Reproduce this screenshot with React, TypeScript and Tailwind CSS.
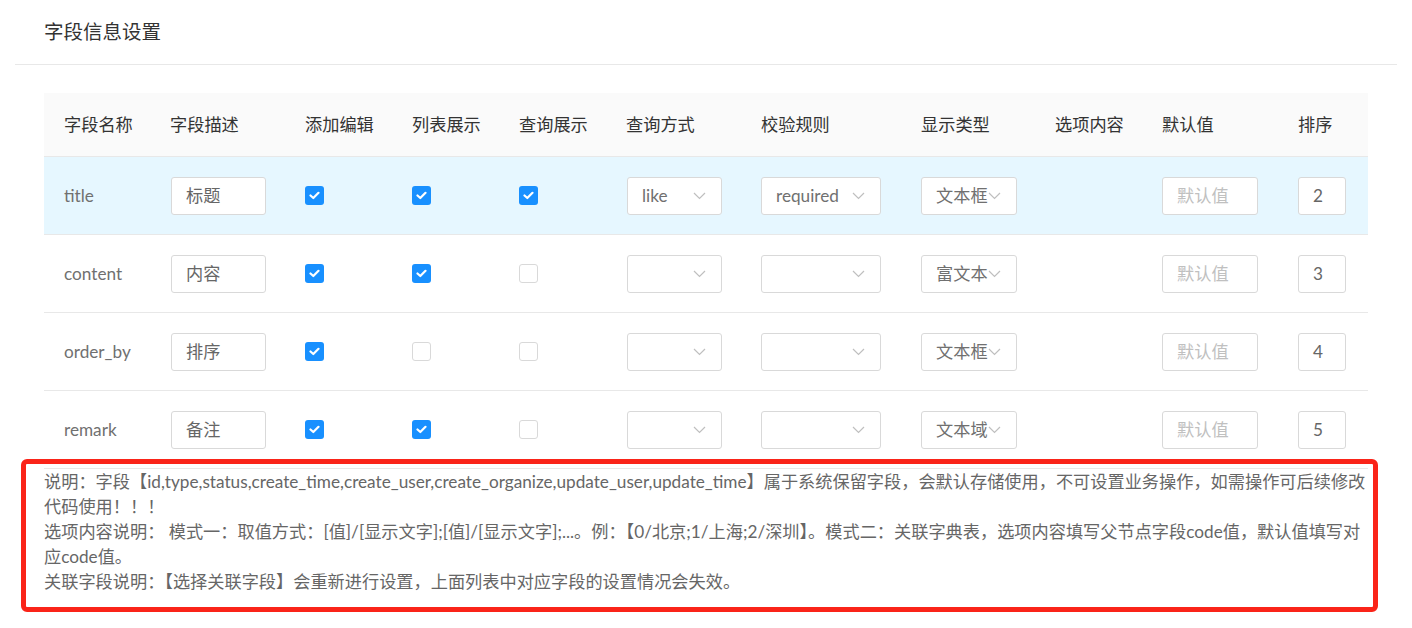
import React from "react";

const font = { fontFamily: '"Lato", "Noto Sans CJK SC", sans-serif' };

type Row = {
  name: string;
  desc: string;
  add: boolean;
  list: boolean;
  query: boolean;
  method: string;
  rule: string;
  display: string;
  order: string;
  hl?: boolean;
};

const rows: Row[] = [
  { name: "title", desc: "标题", add: true, list: true, query: true, method: "like", rule: "required", display: "文本框", order: "2", hl: true },
  { name: "content", desc: "内容", add: true, list: true, query: false, method: "", rule: "", display: "富文本", order: "3" },
  { name: "order_by", desc: "排序", add: true, list: false, query: false, method: "", rule: "", display: "文本框", order: "4" },
  { name: "remark", desc: "备注", add: true, list: true, query: false, method: "", rule: "", display: "文本域", order: "5" },
];

const cols = "grid grid-cols-[106px_135px_107px_107px_107px_135px_160px_134px_107px_136px_90px]";

function Check({ on }: { on: boolean }) {
  if (on)
    return (
      <span className="flex h-[19px] w-[19px] items-center justify-center rounded-[3px] bg-[#1890ff]">
        <svg width="11" height="9" viewBox="0 0 11 9" fill="none">
          <polyline points="1.5,4.5 4.3,7 9.5,1.8" stroke="white" strokeWidth="2.2" strokeLinecap="round" strokeLinejoin="round" />
        </svg>
      </span>
    );
  return <span className="block h-[19px] w-[19px] rounded-[3px] border border-[#d9d9d9] bg-white" />;
}

function Chevron() {
  return (
    <svg width="13" height="8" viewBox="0 0 13 8" fill="none" className="shrink-0">
      <polyline points="1,1 6.5,6.5 12,1" stroke="#bfbfbf" strokeWidth="1.2" />
    </svg>
  );
}

function Select({ value, w }: { value: string; w: string }) {
  return (
    <div className={`flex h-[38px] items-center rounded-[3px] border border-[#d9d9d9] bg-white pl-[14px] pr-[15px] ${w}`}>
      <span className="flex-1 whitespace-nowrap text-[#707070]">{value}</span>
      <Chevron />
    </div>
  );
}

function Input({ value, placeholder, w }: { value?: string; placeholder?: string; w: string }) {
  return (
    <div className={`flex h-[38px] items-center rounded-[3px] border border-[#d9d9d9] bg-white pl-[14px] ${w}`}>
      {value ? <span className="text-[#666]">{value}</span> : <span className="text-[#c0c0c0]">{placeholder}</span>}
    </div>
  );
}

export default function App() {
  const headers = ["字段名称", "字段描述", "添加编辑", "列表展示", "查询展示", "查询方式", "校验规则", "显示类型", "选项内容", "默认值", "排序"];
  return (
    <div className="min-h-[628px] w-[1412px] bg-white px-[15px] text-[17.2px]" style={font}>
      <div className="flex h-[65px] items-center border-b border-[#e8e8e8] pl-[29px] text-[19.5px] text-[#333]">字段信息设置</div>
      <div className="ml-[29px] mt-[28px] w-[1324px]">
        <div className={`${cols} h-[64px] items-center border-b border-[#e8e8e8] bg-[#fafafa] text-[#333]`}>
          {headers.map((h) => (
            <div key={h} className="whitespace-nowrap pl-[20px]">
              {h}
            </div>
          ))}
        </div>
        {rows.map((r) => (
          <div key={r.name} className={`${cols} h-[78px] items-center border-b border-[#e8e8e8] ${r.hl ? "bg-[#e6f7ff]" : "bg-white"}`}>
            <div className="pl-[20px] text-[#707070]">{r.name}</div>
            <div className="pl-[21px]">
              <Input value={r.desc} w="w-[95px]" />
            </div>
            <div className="pl-[20px]">
              <Check on={r.add} />
            </div>
            <div className="pl-[20px]">
              <Check on={r.list} />
            </div>
            <div className="pl-[20px]">
              <Check on={r.query} />
            </div>
            <div className="pl-[21px]">
              <Select value={r.method} w="w-[95px]" />
            </div>
            <div className="pl-[20px]">
              <Select value={r.rule} w="w-[120px]" />
            </div>
            <div className="pl-[20px]">
              <Select value={r.display} w="w-[96px]" />
            </div>
            <div />
            <div className="pl-[20px]">
              <Input placeholder="默认值" w="w-[96px]" />
            </div>
            <div className="pl-[20px]">
              <Input value={r.order} w="w-[48px]" />
            </div>
          </div>
        ))}
        <div className="relative leading-[25px] text-[#666]">
          <p>
            说明：字段【id,type,status,create_time,create_user,create_organize,update_user,update_time】属于系统保留字段，会默认存储使用，不可设置业务操作，如需操作可后续修改代码使用！！！
          </p>
          <p>
            选项内容说明： 模式一：取值方式：[值]/[显示文字];[值]/[显示文字];...。例：【0/北京;1/上海;2/深圳】。模式二：关联字典表，选项内容填写父节点字段code值，默认值填写对应code值。
          </p>
          <p>关联字段说明：【选择关联字段】会重新进行设置，上面列表中对应字段的设置情况会失效。</p>
          <div className="pointer-events-none absolute -bottom-[18px] -left-[23px] -right-[10px] -top-[10px] rounded-[6px] border-[5px] border-[#fa2419]" />
        </div>
      </div>
    </div>
  );
}
